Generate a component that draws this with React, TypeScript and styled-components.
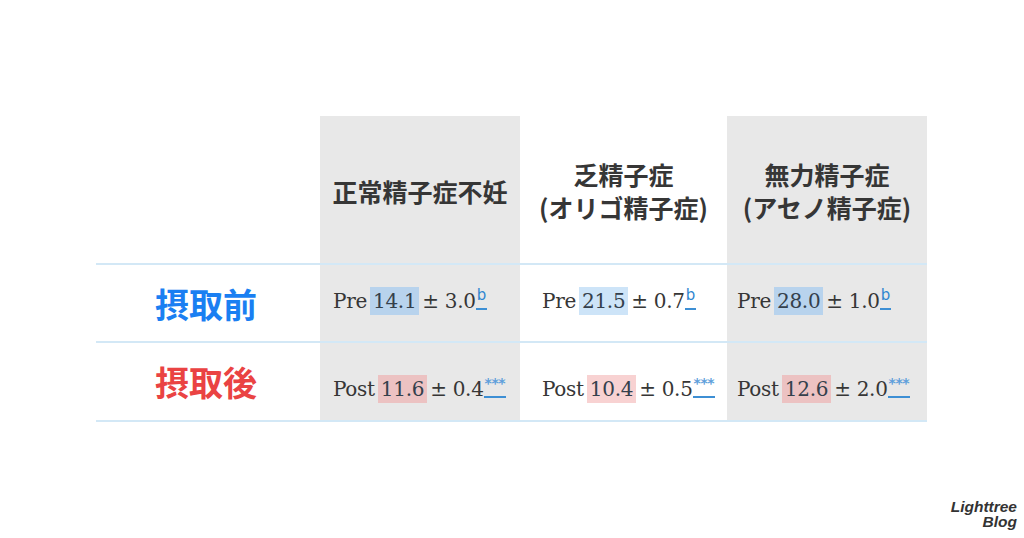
import React from "react";
import styled, { createGlobalStyle } from "styled-components";

const Global = createGlobalStyle`
  html, body { margin: 0; padding: 0; background: #ffffff; }
  #root { width: 1024px; height: 538px; }
`;

const Page = styled.div`
  position: relative;
  width: 1024px;
  height: 538px;
  background: #ffffff;
  padding: 116px 0 0 96px;
  box-sizing: border-box;
`;

const Table = styled.div`
  display: grid;
  grid-template-columns: 224px 200px 207px 200px;
  grid-template-rows: 147px 78px 79px;
  width: 831px;
  border-bottom: 2px solid #d3e8f6;
`;

const HeadCell = styled.div<{ $gray?: boolean }>`
  display: flex;
  align-items: center;
  justify-content: center;
  text-align: center;
  background: ${(p) => (p.$gray ? "#e8e8e8" : "transparent")};
  font-family: "Noto Sans CJK JP", "Noto Sans", sans-serif;
  font-weight: 700;
  font-size: 25px;
  line-height: 33px;
  color: #363636;
  padding-top: 3px;
  box-sizing: border-box;
`;

const LabelCell = styled.div<{ $color: string }>`
  display: flex;
  align-items: center;
  justify-content: center;
  border-top: 2px solid #d3e8f6;
  font-family: "Noto Sans CJK JP", "Noto Sans", sans-serif;
  font-weight: 700;
  font-size: 34px;
  color: ${(p) => p.$color};
  padding-right: 4px;
  box-sizing: border-box;
`;

const DataCell = styled.div<{ $gray?: boolean; $left: number; $top: number }>`
  display: flex;
  align-items: flex-start;
  border-top: 2px solid #d3e8f6;
  background: ${(p) => (p.$gray ? "#e8e8e8" : "transparent")};
  padding-left: ${(p) => p.$left}px;
  padding-top: ${(p) => p.$top}px;
  box-sizing: border-box;
`;

const Value = styled.div`
  font-family: "DejaVu Serif", "Liberation Serif", serif;
  font-size: 20px;
  color: #363636;
  white-space: nowrap;
  letter-spacing: -0.3px;
`;

const Mark = styled.span<{ $bg: string }>`
  background: ${(p) => p.$bg};
  padding: 2px 3px;
  margin: 0 3px 0 3px;
  color: #34404c;
`;

const Ref = styled.span`
  display: inline-block;
  overflow: hidden;
  vertical-align: baseline;
  margin: 0 0 -2px 0;
  font-family: "DejaVu Sans", sans-serif;
  font-size: 15px;
  line-height: 15px;
  color: #2f86d0;
  padding: 1px 1px 5px 1px;
  border-bottom: 2px solid #3d8fd4;
  letter-spacing: 0;
`;

const Stars = styled.span`
  color: #5f9fdb;
  font-size: 14px;
  font-weight: 700;
  letter-spacing: -0.5px;
`;

const Watermark = styled.div`
  position: absolute;
  right: 7px;
  bottom: 9px;
  text-align: right;
  font-family: "Liberation Sans", Arial, sans-serif;
  font-weight: 700;
  font-style: italic;
  font-size: 15.5px;
  line-height: 15px;
  color: #333333;
`;

const BLUE_GRAY = "#b8d3ed";
const BLUE_WHITE = "#cde4f8";
const PINK_GRAY = "#ecc2c2";
const PINK_WHITE = "#f8d2d2";

type Row = { pre: [string, string]; post: [string, string] };

const cols: { gray: boolean; left: number; row: Row }[] = [
  { gray: true, left: 13, row: { pre: ["14.1", "3.0"], post: ["11.6", "0.4"] } },
  { gray: false, left: 22, row: { pre: ["21.5", "0.7"], post: ["10.4", "0.5"] } },
  { gray: true, left: 10, row: { pre: ["28.0", "1.0"], post: ["12.6", "2.0"] } },
];

export default function App() {
  return (
    <>
      <Global />
      <Page>
        <Table>
          <HeadCell />
          <HeadCell $gray>正常精子症不妊</HeadCell>
          <HeadCell>
            乏精子症
            <br />
            (オリゴ精子症)
          </HeadCell>
          <HeadCell $gray>
            無力精子症
            <br />
            (アセノ精子症)
          </HeadCell>

          <LabelCell $color="#1a7ff2">摂取前</LabelCell>
          {cols.map((c, i) => (
            <DataCell key={"pre" + i} $gray={c.gray} $left={c.left} $top={22}>
              <Value>
                Pre<Mark $bg={c.gray ? BLUE_GRAY : BLUE_WHITE}>{c.row.pre[0]}</Mark>± {c.row.pre[1]}
                <Ref>b</Ref>
              </Value>
            </DataCell>
          ))}

          <LabelCell $color="#ea4343">摂取後</LabelCell>
          {cols.map((c, i) => (
            <DataCell key={"post" + i} $gray={c.gray} $left={c.left} $top={32}>
              <Value>
                Post<Mark $bg={c.gray ? PINK_GRAY : PINK_WHITE}>{c.row.post[0]}</Mark>± {c.row.post[1]}
                <Ref>
                  <Stars>***</Stars>
                </Ref>
              </Value>
            </DataCell>
          ))}
        </Table>
        <Watermark>
          Lighttree
          <br />
          Blog
        </Watermark>
      </Page>
    </>
  );
}
